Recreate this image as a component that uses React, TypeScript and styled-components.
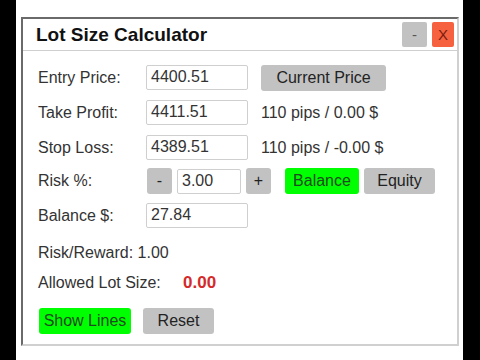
import React from "react";
import styled, { createGlobalStyle } from "styled-components";

const GlobalStyle = createGlobalStyle`
  html, body {
    margin: 0;
    padding: 0;
    background: #000;
  }
  body {
    font-family: "Liberation Sans", Arial, sans-serif;
  }
`;

const Screen = styled.div`
  display: flex;
  width: 480px;
  height: 360px;
  background: #000;
`;

const Stage = styled.div`
  margin-left: 16px;
  width: 447px;
  height: 360px;
  background: #fff;
  padding: 17px 0 0 5px;
  box-sizing: border-box;
`;

const Panel = styled.div`
  width: 438px;
  height: 329px;
  box-sizing: border-box;
  border-top: 2px solid #6a6a6a;
  border-left: 2px solid #6a6a6a;
  border-right: 2px solid #d0d0d0;
  border-bottom: 2px solid #d0d0d0;
  background: #fff;
  display: flex;
  flex-direction: column;
`;

const TitleBar = styled.div`
  display: flex;
  align-items: center;
  justify-content: space-between;
  height: 31px;
  padding: 0 3px 0 13px;
  border-bottom: 1px solid #cfcfcf;
`;

const Title = styled.span`
  font-size: 19px;
  font-weight: bold;
  color: #111;
`;

const WinButtons = styled.div`
  display: flex;
  gap: 5px;
  align-items: center;
`;

const WinButton = styled.button<{ $close?: boolean }>`
  width: ${(p) => (p.$close ? "22px" : "25px")};
  height: 25px;
  border: none;
  border-radius: 2px;
  padding: 0;
  font-family: inherit;
  font-size: 15px;
  background: ${(p) => (p.$close ? "#f6623f" : "#c2c2c2")};
  color: ${(p) => (p.$close ? "#7a1c10" : "#555")};
`;

const Body = styled.div`
  display: flex;
  flex-direction: column;
  padding: 14px 0 0 15px;
`;

const Row = styled.div<{ $gap?: number; $h?: number }>`
  display: flex;
  align-items: center;
  height: ${(p) => p.$h ?? 25}px;
  margin-bottom: ${(p) => p.$gap ?? 10}px;
`;

const Label = styled.span<{ $width?: number }>`
  width: ${(p) => p.$width ?? 108}px;
  flex-shrink: 0;
  white-space: nowrap;
  font-size: 16px;
  color: #333;
`;

const Input = styled.div<{ $width?: number }>`
  width: ${(p) => p.$width ?? 102}px;
  height: 25px;
  box-sizing: border-box;
  border: 1px solid #cfcfcf;
  border-radius: 2px;
  padding: 2px 0 0 4px;
  font-size: 16px;
  color: #333;
`;

const Info = styled.span`
  margin-left: 13px;
  font-size: 16px;
  color: #333;
`;

const Btn = styled.button<{ $width: number; $on?: boolean; $ml?: number }>`
  width: ${(p) => p.$width}px;
  height: 26px;
  margin-left: ${(p) => p.$ml ?? 0}px;
  border: none;
  border-radius: 3px;
  padding: 0;
  font-family: inherit;
  font-size: 16px;
  background: ${(p) => (p.$on ? "#00ff00" : "#c2c2c2")};
  color: ${(p) => (p.$on ? "#1f4a1f" : "#222")};
  flex-shrink: 0;
`;

const Text = styled.div`
  font-size: 16px;
  color: #333;
  height: 20px;
  line-height: 20px;
`;

const LotRow = styled.div`
  display: flex;
  align-items: center;
  height: 20px;
  margin: 10px 0 15px;
`;

const LotValue = styled.span`
  font-size: 17px;
  font-weight: bold;
  color: #d42a2a;
`;

const Actions = styled.div`
  display: flex;
  gap: 12px;
  padding-left: 1px;
`;

export default function App() {
  return (
    <>
      <GlobalStyle />
      <Screen>
        <Stage>
          <Panel>
            <TitleBar>
              <Title>Lot Size Calculator</Title>
              <WinButtons>
                <WinButton>-</WinButton>
                <WinButton $close>X</WinButton>
              </WinButtons>
            </TitleBar>
            <Body>
              <Row>
                <Label>Entry Price:</Label>
                <Input>4400.51</Input>
                <Btn $width={125} $ml={13}>
                  Current Price
                </Btn>
              </Row>
              <Row>
                <Label>Take Profit:</Label>
                <Input>4411.51</Input>
                <Info>110 pips / 0.00 $</Info>
              </Row>
              <Row $gap={8}>
                <Label>Stop Loss:</Label>
                <Input>4389.51</Input>
                <Info>110 pips / -0.00 $</Info>
              </Row>
              <Row $gap={9} $h={26}>
                <Label $width={109}>Risk %:</Label>
                <Btn $width={25}>-</Btn>
                <Input $width={64} style={{ marginLeft: 5 }}>
                  3.00
                </Input>
                <Btn $width={25} $ml={5}>
                  +
                </Btn>
                <Btn $width={74} $ml={14} $on>
                  Balance
                </Btn>
                <Btn $width={71} $ml={5}>
                  Equity
                </Btn>
              </Row>
              <Row $gap={15}>
                <Label>Balance $:</Label>
                <Input>27.84</Input>
              </Row>
              <Text>Risk/Reward: 1.00</Text>
              <LotRow>
                <Label $width={145}>Allowed Lot Size:</Label>
                <LotValue>0.00</LotValue>
              </LotRow>
              <Actions>
                <Btn $width={92} $on>
                  Show Lines
                </Btn>
                <Btn $width={71}>Reset</Btn>
              </Actions>
            </Body>
          </Panel>
        </Stage>
      </Screen>
    </>
  );
}
